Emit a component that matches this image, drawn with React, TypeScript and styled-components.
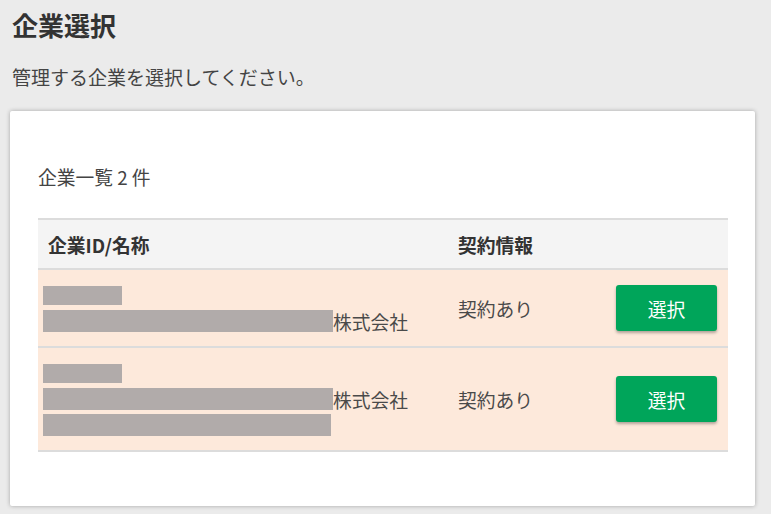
import React from "react";
import styled, { createGlobalStyle } from "styled-components";

const Global = createGlobalStyle`
  html, body { margin: 0; padding: 0; background: #ebebeb; }
  body { font-family: "Noto Sans CJK JP", "Noto Sans", sans-serif; color: #333; }
  * { box-sizing: border-box; }
`;

const Page = styled.div`
  padding: 6px 16px 9px 10px;
  min-height: 514px;
`;

const Title = styled.h1`
  margin: 0 0 0 2px;
  font-size: 26px;
  font-weight: 700;
  line-height: 38px;
  color: #333;
`;

const Lead = styled.p`
  margin: 20px 0 0 2px;
  font-size: 19px;
  line-height: 26px;
  color: #444;
`;

const Card = styled.section`
  margin-top: 21px;
  background: #fff;
  box-shadow: 0 0 4px rgba(0, 0, 0, 0.3);
  border-radius: 2px;
  padding: 53px 27px 54px 28px;
`;

const Count = styled.div`
  font-size: 18.75px;
  line-height: 26px;
  color: #444;
  margin-bottom: 28px;
`;

const Table = styled.div`
  display: grid;
  grid-template-columns: 410px 157px 1fr;
  border-top: 2px solid #dcdcdc;
`;

const HeadCell = styled.div`
  background: #f4f4f4;
  height: 50px;
  display: flex;
  align-items: center;
  padding-left: 10px;
  font-size: 18.75px;
  font-weight: 700;
  color: #333;
  border-bottom: 2px solid #dcdcdc;
`;

const Cell = styled.div<{ $end?: boolean }>`
  background: #fde9db;
  border-bottom: 2px solid #dcdcdc;
  display: flex;
  align-items: center;
  justify-content: ${(p) => (p.$end ? "flex-end" : "flex-start")};
  padding: 0 ${(p) => (p.$end ? "11px" : "10px")};
  font-size: 18.75px;
  color: #4a4a4a;
`;

const NameCell = styled(Cell)`
  flex-direction: column;
  align-items: flex-start;
  padding: 12px 5px 12px;
`;

const Line = styled.div`
  height: 26px;
  display: flex;
  align-items: center;
  font-size: 18.75px;
  color: #4a4a4a;
  white-space: nowrap;
`;

const Redact = styled.span<{ $w: number; $h?: number }>`
  display: inline-block;
  width: ${(p) => p.$w}px;
  height: ${(p) => p.$h ?? 21}px;
  background: #b1abaa;
`;

const SelectButton = styled.button`
  width: 101px;
  height: 46px;
  border: none;
  border-radius: 3px;
  background: #00a55a;
  color: #fff;
  font-family: inherit;
  font-size: 18.75px;
  box-shadow: 0 2px 3px rgba(0, 0, 0, 0.3);
  cursor: pointer;
`;

type Row = { lines: { w: number; suffix?: string; h?: number }[] };

const rows: Row[] = [
  { lines: [{ w: 79, h: 19 }, { w: 290, suffix: "株式会社", h: 22 }] },
  { lines: [{ w: 79, h: 19 }, { w: 290, suffix: "株式会社", h: 22 }, { w: 288, h: 22 }] },
];

export default function App() {
  return (
    <>
      <Global />
      <Page>
        <Title>企業選択</Title>
        <Lead>管理する企業を選択してください。</Lead>
        <Card>
          <Count>企業一覧 2 件</Count>
          <Table>
            <HeadCell>企業ID/名称</HeadCell>
            <HeadCell>契約情報</HeadCell>
            <HeadCell />
            {rows.map((r, i) => (
              <React.Fragment key={i}>
                <NameCell>
                  {r.lines.map((l, j) => (
                    <Line key={j}>
                      <Redact $w={l.w} $h={l.h} />
                      {l.suffix}
                    </Line>
                  ))}
                </NameCell>
                <Cell>契約あり</Cell>
                <Cell $end>
                  <SelectButton>選択</SelectButton>
                </Cell>
              </React.Fragment>
            ))}
          </Table>
        </Card>
      </Page>
    </>
  );
}
